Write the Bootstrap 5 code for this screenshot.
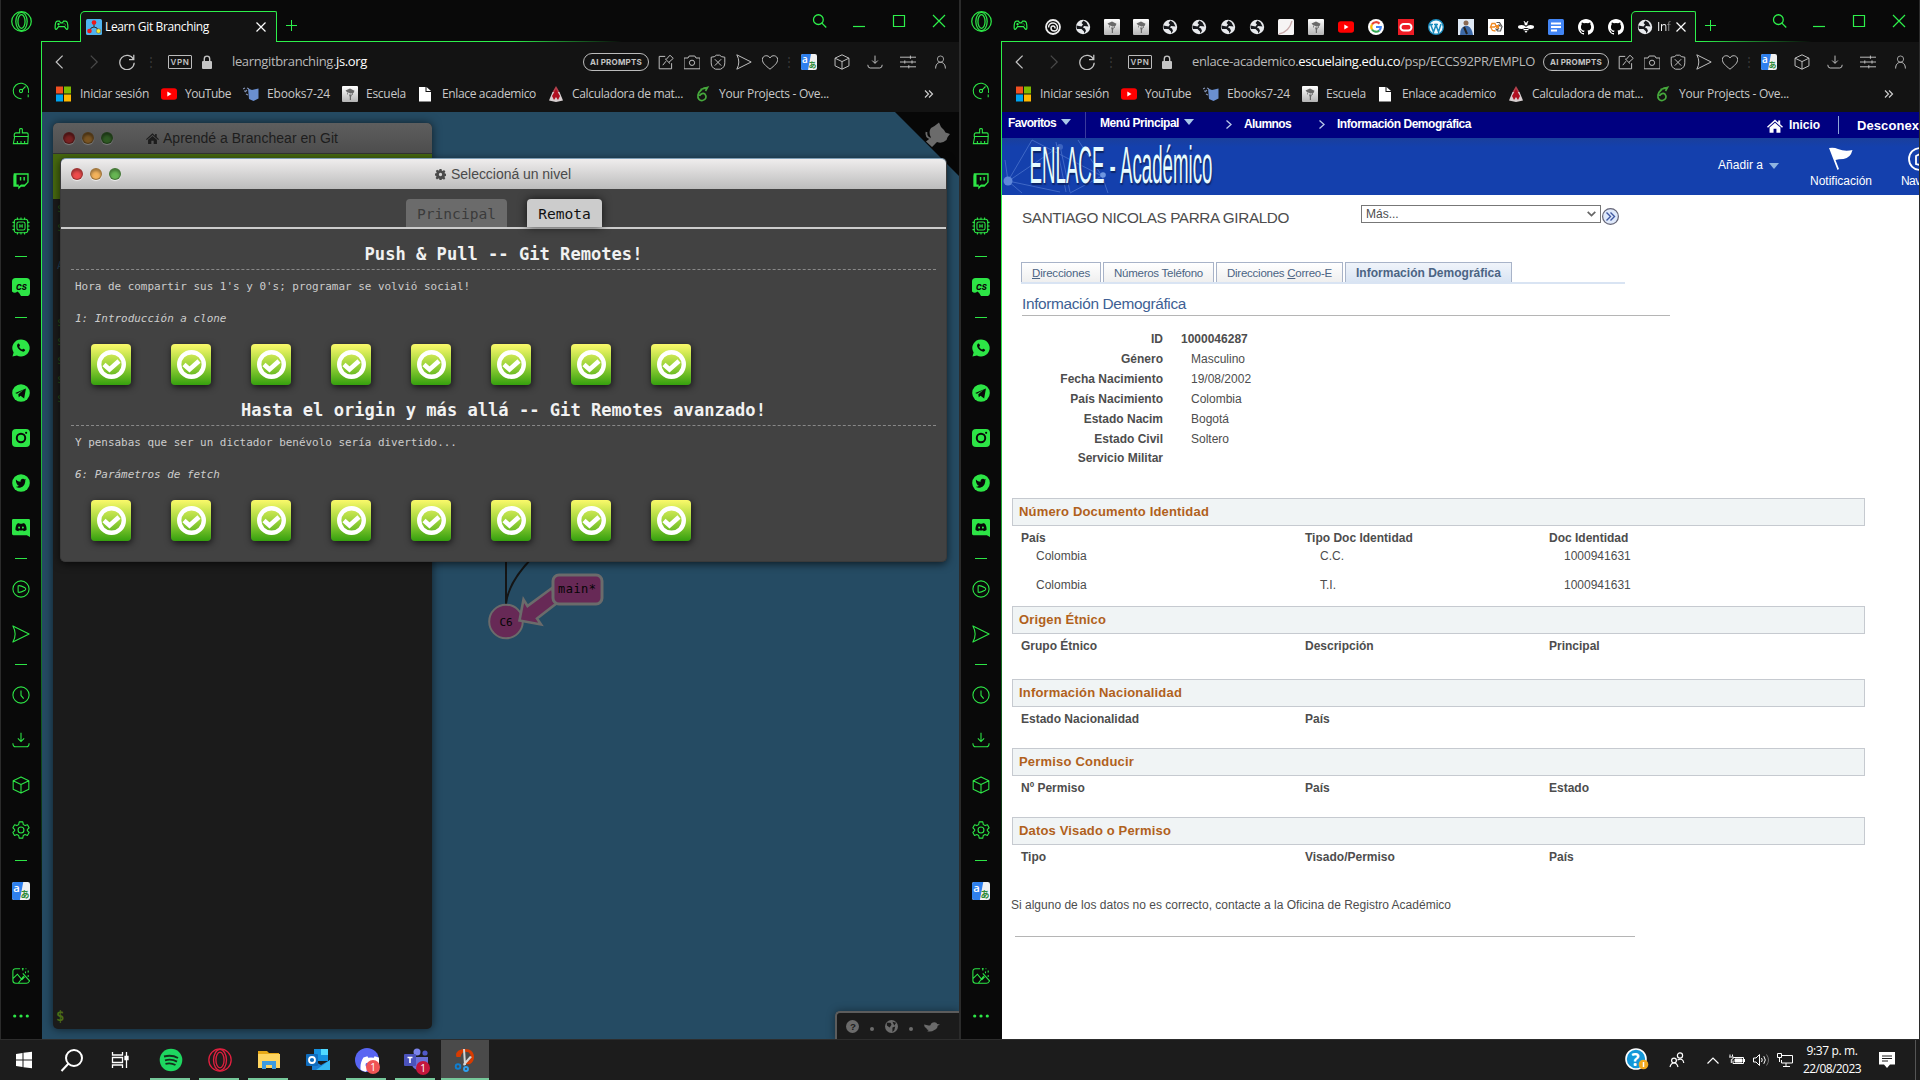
<!DOCTYPE html>
<html lang="es">
<head>
<meta charset="utf-8">
<title>Escritorio</title>
<link rel="stylesheet" href="https://cdn.jsdelivr.net/npm/bootstrap@5.3.0/dist/css/bootstrap.min.css">
<style>
:root{--neon:#2df04b;--chrome:#131313}
body{width:1920px;height:1080px;overflow:hidden;background:#0a0a0a;font:12px/16px "Open Sans","Noto Sans",sans-serif;letter-spacing:0}
svg{display:block;flex:none}
.ico{width:20px;height:20px;fill:none;stroke:currentColor;stroke-width:1.2}
.fit{display:inline-block;white-space:nowrap;flex:none}
.opera-win{width:960px;height:1040px;border-bottom:1px solid #2d2d2d;overflow:hidden}
.sidebar-gx{width:42px;flex:none;border-left:1px solid #2b2b2b;color:#2de546;background:linear-gradient(#2df04b 25%,#0f5a1c 65%,#0a0a0a 85%) right 41px/1px 100% no-repeat #090909}
.sidebar-gx .cell{height:45px;width:40px}
.sidebar-gx .dash{height:16px;width:40px}
.sidebar-gx .dash::before{content:"";width:12px;height:1px;background:currentColor}
.sidebar-gx .ico{width:18px;height:18px}
.sidebar-gx .low{height:40px;width:40px}
.win-main{width:918px;border-right:1px solid #2b2b2b}
.tabstrip{height:42px;background:linear-gradient(90deg,var(--neon) 0,var(--neon) var(--glow),transparent calc(var(--glow) + 110px)) 0 41px/100% 1px no-repeat #090909;color:var(--neon)}
.gx-tab{height:31px;background:var(--chrome);border:1px solid var(--neon);border-bottom:0;border-radius:5px 2px 0 0;color:#fff}
.pin{width:30px;height:31px;color:#e8eaed}
.pin.near{width:29px}
.pin svg{width:16px;height:16px}
.winbtn{width:40px;height:42px}
.toolbar{height:40px;background:var(--chrome);color:#c4c4c4}
.toolbar .ico{width:16px;height:16px}
.tc{width:33px}.tc2{width:26px}.tdots{width:9px;color:#3a3a3a}
.vpn{width:24px;height:14px;border:1px solid #bbb;border-radius:1px;font:600 8px/12px Inter,sans-serif}
.url{font-size:13px;line-height:16px;padding-bottom:2px;color:#b9b9b9}
.url b{color:#fff;font-weight:400}
.ai{width:66px;height:18px;border:1px solid #bbb;border-radius:9px;font:700 8px/16px Inter,sans-serif}
.bookmarks{height:30px;background:var(--chrome);color:#c9c9c9;padding-left:14px;gap:12px}
.bookmarks svg.bk{width:16px;height:16px}
.webpage{height:928px}
/* git page */
.gitpage{background:#254b63;font-family:"DejaVu Sans Mono",monospace}
.term{left:11px;top:11px;width:379px;height:906px;background:#1b1b1b;border-radius:5px;box-shadow:0 0 10px rgba(0,0,0,.6)}
.tbar{height:31px;border-radius:5px 5px 0 0;padding-left:10px;font:14px/30px "Liberation Sans",sans-serif}
.term .tbar{background:linear-gradient(#5e5e5e,#4d4d4d);color:#1d1d1d;border-bottom:1px solid #333}
.lamp{width:12px;height:12px;border-radius:50%;border:1px solid rgba(0,0,0,.35);box-shadow:0 1px 1px rgba(255,255,255,.7),inset 0 2px 3px rgba(0,0,0,.35)}
.term .lamp{box-shadow:0 1px 1px rgba(255,255,255,.25),inset 0 2px 3px rgba(0,0,0,.45)}
.goal{height:45px;background:#46680f}
.prompt{font-size:11px;line-height:19px;color:#28511a;padding-left:4px}
.dialog-gl{left:18px;top:46px;width:887px;height:404px;background:#424242;border-radius:5px;border:1px solid #3a3a3a;border-width:0 1px 1px 1px;box-shadow:0 2px 9px rgba(0,0,0,.65);color:#ccc}
.dialog-gl>.tbar{background:linear-gradient(#efeded,#bcbcbc);color:#4a4a4a;border-top:1px solid #7d9db5}
.tabrow{height:40px;border-bottom:2px solid #ccc;padding-left:1px}
.ltab{height:28px;border-radius:4px 4px 0 0;background:#6b6b6b;color:#3b3b3b;font-size:14.6px;line-height:30px}
.ltab.on{background:#ccc;color:#111;box-shadow:0 0 10px rgba(0,0,0,.7)}
.serie h3{font-size:17.1px;font-weight:700;line-height:28px;margin:0 10px;padding:11px 0 1px;border-bottom:1px dashed #888;color:#f1f1f1;text-align:center}
.serie p{font-size:10.94px;line-height:34px;height:32px;margin:0;padding-left:14px}
.levels{padding:10px 0 0 30px;gap:40px}
.lvl{width:40px;height:41px;border-radius:4px;background:linear-gradient(#fbf96a,#9fd53b 50%,#35a00e);box-shadow:1px 2px 7px rgba(0,0,0,.7)}
.footbox{right:0;bottom:0;width:124px;height:29px;background:#1b1b1b;border:2px solid #5c5c5c;border-width:2px 0 0 2px;border-radius:5px 0 0 0;color:#6b6b6b;box-shadow:0 0 8px rgba(0,0,0,.4)}
/* academic page */
.acad{background:#fff;font-family:"Liberation Sans",Arial,sans-serif;color:#4d4d4d}
.crumbs{height:26px;background:#000080;color:#fff;font-weight:700}
.crumbs>*{flex:none}
.banner{height:57px;background:linear-gradient(#1a3f9c,#1440ad 9px);color:#fff}
.who{height:43px;font-size:15.3px;padding-left:20px}
.pick{width:240px;height:18px;border:1px solid #777;font-size:12px;line-height:15px;padding:0 4px;margin-top:10px}
.ptabs{margin:24px 0 0 19px;width:604px;height:22px;border-bottom:2px solid #d9e4f3;gap:2px}
.ptab{height:20px;border:1px solid #a8b3c8;border-bottom:0;background:linear-gradient(#fff,#efefef);color:#4b6484;line-height:20px;font-size:11.5px;text-align:center;flex:none}
.ptab.on{background:linear-gradient(#f0f4fa,#d9e4f3);font-weight:700;font-size:12px}
.ptitle{margin:8px 0 13px 20px;width:648px;height:24px;font-size:15.4px;line-height:24px;color:#405f94;border-bottom:1px solid #b5b5b5}
.frow{height:20px;line-height:20px}
.frow .lab{width:161px;text-align:right;font-weight:700}
.shead{width:853px;height:28px;margin-left:10px;border:1px solid #c6cad0;background:#f0f4f5;color:#b0611c;font-weight:700;font-size:13px;line-height:26px;padding-left:6px}
.scols{line-height:20px;margin:2px 0 0 19px;font-weight:700}
.sval{line-height:16px;margin-left:34px}
.c1{width:284px;flex:none}.c2{width:244px;flex:none}
/* taskbar */
.taskbar{height:40px;background:#1c1c1c;color:#fff}
.tk{width:49px;height:40px;position:relative}
.tk.sys{width:48px}
.tk.run::after{content:"";position:absolute;left:4px;right:5px;bottom:0;height:2px;background:#76c89a}
.tk.act{background:#4a4a4a;width:48px}.tk.act::after{left:0;right:0}
.tk svg{width:24px;height:24px}
.nbadge{right:3px;bottom:6px;width:14px;height:14px;border-radius:50%;background:#f05454;font-size:10px;line-height:14px;text-align:center}
</style>
<script src="https://cdn.jsdelivr.net/npm/bootstrap@5.3.0/dist/js/bootstrap.bundle.min.js"></script>
</head>
<body>
<svg width="0" height="0" class="position-absolute">
<defs>
<linearGradient id="gy" x1="0" y1="0" x2="0" y2="1"><stop offset="0" stop-color="#fff"/><stop offset="1" stop-color="#b5b5b5"/></linearGradient>
<symbol id="opera" viewBox="0 0 20 20"><circle cx="10" cy="10" r="9.3"/><ellipse cx="10" cy="10" rx="5.4" ry="8.8"/><ellipse cx="10" cy="10" rx="3.4" ry="6.5"/></symbol>
<symbol id="pad" viewBox="0 0 20 20"><path d="M5 5.500h2.500L9 7.500h2l1.500-2H15c2 0 2.500 5 2.500 8 0 2-1.500 2-2.500.5L13.500 12h-7L5 14c-1 1.500-2.500 1.500-2.500-.5 0-3 .5-8 2.500-8zM5 9h3M6.500 7.500v3M12.500 8.500h1M14 10h1" stroke-width="1.400"/></symbol>
<symbol id="speed" viewBox="0 0 20 20"><path d="M10.500 18.500A8.600 8.600 0 1 1 18.300 12M18 14v3M11 9l4-4"/><circle cx="10" cy="10" r="1.800"/></symbol>
<symbol id="broom" viewBox="0 0 20 20"><path d="M8.500 6.500V2.500c0-1 3-1 3 0v4h5q1.500 0 1.500 2v2H2.500v-2q0-2 2-2zM3 10.500l-1.500 8h16l.5-8M6 18.500v-3M10 18.500v-3M14 18.500v-3"/></symbol>
<symbol id="twitch" viewBox="0 0 20 20"><path d="M2 1.500h16.500v10l-4.500 5H10l-3 3v-3H1.500v-12z" fill="currentColor" stroke="none"/><path d="M5 3h12v8l-3 3H10l-2.500 2v-2H5z" fill="#090909" stroke="none"/><path d="M9.500 5.500v4M13.500 5.500v4" stroke-width="1.600"/></symbol>
<symbol id="cpu" viewBox="0 0 20 20"><rect x="2.500" y="2.500" width="15" height="15" rx="2.500"/><rect x="5.500" y="5.500" width="9" height="9" rx="2"/><path d="M8.700 8v4M11.300 8v4M8.700 10h2.600M6 0.500V3M10 0.500V3M14 .5V3M6 17v2.500M10 17v2.500M14 17v2.500M.5 6H3M.5 10H3M.5 14H3M17 6h2.500M17 10h2.500M17 14h2.500"/></symbol>
<symbol id="cs" viewBox="0 0 20 20"><path d="M4 0h12q4 0 4 4v12q0 4-4 4h-6q-2-4-4-5-3 3-6 0V4q0-4 4-4z" fill="currentColor" stroke="none"/><text x="4.500" y="13.500" font-family="Inter,sans-serif" font-size="8.500" font-style="italic" font-weight="800" fill="#090909" stroke="none">CS</text></symbol>
<symbol id="wa" viewBox="0 0 20 20"><path d="M10 .5a9.500 9.500 0 1 1-4.500 17.800L.5 19.500 1.800 15A9.500 9.500 0 0 1 10 .5z" fill="currentColor" stroke="none"/><path d="M6.300 5.500c-1.800 2 .4 5.500 3 7.200 2.200 1.500 4.300 2 5.200.1.400-.9-.8-1.600-1.900-2-.7-.2-1 1-1.600.9-1.400-.4-2.800-1.900-3-3 0-.5 1-.9.8-1.600-.6-1.800-1.300-2.700-2.500-1.600z" fill="#090909" stroke="none"/></symbol>
<symbol id="tg" viewBox="0 0 20 20"><circle cx="10" cy="10" r="9.800" fill="currentColor" stroke="none"/><path d="M3.500 10 15.500 5l-2 11-4-3-2 1.800-.5-3.500 6-5-7.500 4.500z" fill="#090909" stroke="none"/></symbol>
<symbol id="ig" viewBox="0 0 20 20"><rect width="20" height="20" rx="4.500" fill="currentColor" stroke="none"/><circle cx="10" cy="10" r="4.700" stroke="#090909" stroke-width="2.200"/><circle cx="15.700" cy="4.300" r="1.200" fill="#090909" stroke="none"/></symbol>
<symbol id="bird" viewBox="0 0 20 20"><path d="M1 3.500C3.200 6 6 7.400 9.300 7.500 8.600 4.300 11 2 13.500 2c1.300 0 2.300.6 3 1.300L19 2.300l-1.400 2.100 1.900-.4-1.700 1.900C18.200 12.500 13 18 7.500 18 5 18 2.500 17.300 1 16.200c2 .1 4-.5 5.400-1.600-1.700-.2-2.900-1.200-3.400-2.700h1.500C2.800 11.200 1.700 10 1.600 8l1.600.5C1.300 7.100.4 5.300 1 3.500z"/></symbol>
<symbol id="twc" viewBox="0 0 20 20"><circle cx="10" cy="10" r="9.800" fill="currentColor" stroke="none"/><svg x="3.500" y="4" width="13" height="12.500" viewBox="0 0 20 20"><path d="M1 3.500C3.200 6 6 7.400 9.300 7.500 8.600 4.300 11 2 13.500 2c1.300 0 2.300.6 3 1.300L19 2.300l-1.400 2.100C18.200 12.500 13 18 7.500 18 5 18 2.500 17.300 1 16.200c2 .1 4-.5 5.400-1.600-1.700-.2-2.900-1.200-3.400-2.700C1.800 10 .4 6.300 1 3.500z" fill="#090909" stroke="none"/></svg></symbol>
<symbol id="dcface" viewBox="0 0 20 20"><path d="M7 3.500 3.700 4.600C1.800 7.400 1 10.800 1.300 14.500c1.500 1.100 3 1.700 4.500 2l1-1.600c2 .7 4.500.7 6.500 0l1 1.600c1.500-.3 3-.9 4.500-2 .3-3.700-.5-7.100-2.400-9.900L13 3.500l-.7 1.200q-2.300-.3-4.600 0zM7 9a1.600 1.800 0 1 1 0 3.600A1.600 1.800 0 0 1 7 9zm6 0a1.600 1.800 0 1 1 0 3.600A1.600 1.800 0 0 1 13 9z" fill-rule="evenodd" stroke="none"/></symbol>
<symbol id="dc" viewBox="0 0 20 20"><path d="M1.500 0h17q1.500 0 1.500 1.500V20l-3.500-2h-15Q0 18 0 16.500v-15Q0 0 1.500 0z" fill="currentColor" stroke="none"/><svg x="3" y="2" width="14" height="14" viewBox="0 0 20 20"><path d="M7 3.500 3.700 4.600C1.800 7.400 1 10.800 1.300 14.500c1.500 1.100 3 1.700 4.500 2l1-1.600c2 .7 4.500.7 6.500 0l1 1.600c1.500-.3 3-.9 4.500-2 .3-3.700-.5-7.100-2.400-9.900L13 3.500l-.7 1.200q-2.300-.3-4.600 0zM7 9a1.600 1.800 0 1 1 0 3.600A1.600 1.800 0 0 1 7 9zm6 0a1.600 1.800 0 1 1 0 3.600A1.600 1.800 0 0 1 13 9z" fill="#090909" fill-rule="evenodd" stroke="none"/></svg></symbol>
<symbol id="play" viewBox="0 0 20 20"><circle cx="10" cy="10" r="9"/><path d="M6.800 6.500v7q1.500 1 7.700-2.200 1.500-1.300 0-2.600Q8.500 5.500 6.800 6.500z" stroke-linejoin="round"/></symbol>
<symbol id="send" viewBox="0 0 20 20"><path d="M1 1l18 9-18 9q5-9 0-18z" stroke-linejoin="round"/></symbol>
<symbol id="clock" viewBox="0 0 20 20"><circle cx="10" cy="10" r="9"/><path d="M10 5v5.500l3 3.500"/></symbol>
<symbol id="down" viewBox="0 0 20 20"><path d="M10 2v9.500M6.500 8.200l3.500 3.500 3.500-3.500M1 13.500q0 4 3 4h12q3 0 3-4"/></symbol>
<symbol id="cube" viewBox="0 0 20 20"><path d="M10 1l8.700 4.200v9.600L10 19l-8.700-4.200V5.200zM1.300 5.200 10 9.500l8.700-4.300M10 9.500V19" stroke-linejoin="round"/></symbol>
<symbol id="gear" viewBox="0 0 20 20"><circle cx="10" cy="10" r="3.300"/><path d="M8 1h4l.6 3 2 1.100 2.600-1 1.800 3.400-2 2v1.200l2 2-1.900 3.300-2.600-1-2 1.100L12 19H8l-.6-2.900-2-1.100-2.600 1L1 12.700l2-2V9.500l-2-2 1.900-3.400 2.500 1L7.400 4z" stroke-linejoin="round"/></symbol>
<symbol id="tr" viewBox="0 0 16 16"><rect width="16" height="16" rx="2" fill="#f1f1f1" stroke="none"/><path d="M2 0h8L7 16H2q-2 0-2-2V2q0-2 2-2z" fill="#2f80ed" stroke="none"/><text x="1" y="9" font-family="Open Sans,sans-serif" font-size="10" font-weight="600" fill="#fff" stroke="none">a</text><text x="7.600" y="14" font-family="Noto Sans CJK JP,sans-serif" font-size="8" font-weight="700" fill="#2e8b3a" stroke="none">あ</text></symbol>
<symbol id="pic" viewBox="0 0 20 20"><path d="M9 2H4Q1 2 1 5v10q0 3 3 3h12q2 0 3-2M1 13l5-5 5 6 3-3M7 18l6-8M12 7l8 9M11 2h2M15 2h1M18 4v2M18 9v2M12 1v3M15 5v2"/></symbol>
<symbol id="more" viewBox="0 0 20 20"><g fill="currentColor" stroke="none"><circle cx="3" cy="10" r="1.800"/><circle cx="10" cy="10" r="1.800"/><circle cx="17" cy="10" r="1.800"/></g></symbol>
<symbol id="glass" viewBox="0 0 20 20"><circle cx="8.500" cy="7.500" r="6.500" stroke-width="1.700"/><path d="M13.200 12.200 19 18" stroke-width="1.700"/></symbol>
<symbol id="shot" viewBox="0 0 20 20"><path d="M9 3H1.500v15.500h15.500v-7M6 14l4-5M9 6l6 6M10 7l5-5.500L19 5.500 13.500 10.500"/></symbol>
<symbol id="cam" viewBox="0 0 20 20"><path d="M0 5h5l1.500-2.500h7L15 5h5v13.500H0z" stroke-linejoin="round"/><circle cx="10" cy="11" r="3.300"/></symbol>
<symbol id="shield" viewBox="0 0 20 20"><path d="M1.500 4q4.500 0 6.500-2.500h4q2 2.500 6.500 2.500v7q0 6-5.500 8H7q-5.500-2-5.500-8z"/><path d="M6 6.500l8 8M14 6.500l-8 8"/></symbol>
<symbol id="heart" viewBox="0 0 20 20"><path d="M10 19C4 14 .5 11.500.5 6.800.5 1.500 8 .5 10 5c2-4.500 9.500-3.500 9.500 1.800 0 4.700-3.500 7.200-9.500 12.200z"/></symbol>
<symbol id="sliders" viewBox="0 0 20 20"><path d="M0 4h20M0 10h20M0 16h20M13 2v4M6 8v4M15 8v4M11 14v4"/></symbol>
<symbol id="person" viewBox="0 0 20 20"><circle cx="10" cy="5.500" r="4.800"/><path d="M2.500 20c0-6 3-9.500 7.500-9.500s7.500 3.500 7.500 9.500" stroke-width="1.500"/></symbol>
<symbol id="reload" viewBox="0 0 20 20"><path d="M18 6.500A9 9 0 1 0 19 11M18.500 1v6h-6" stroke-width="1.600"/></symbol>
<symbol id="yt" viewBox="0 0 16 16"><rect y="2.200" width="16" height="11.600" rx="2.800" fill="#f00"/><path d="M6.300 5.500v5L10.500 8z" fill="#fff"/></symbol>
<symbol id="esc" viewBox="0 0 16 16"><rect width="16" height="16" rx="1" fill="url(#gy)"/><path d="M3.500 4.500 8 2.500l4.500 2.200-1 2.300-3 .6L5 6zM7 8.500h3L9 11v3H7.800v-3z" fill="#6a6a6a"/><path d="M5.500 6.500v2M10.500 7v2" stroke="#888" fill="none"/></symbol>
<symbol id="globe" viewBox="0 0 16 16"><circle cx="8" cy="8" r="7.200" fill="#e8eaed"/><path d="M8.500 1.500 6.500 4 8 5.500 6.500 7.500 1.500 6.500A7 7 0 0 0 2 10l4.500 0L9 12.500v2l2-2.500-1-2.500-2-1 1-1.500 4.500.5-2-4z" fill="#16181c"/></symbol>
<symbol id="gh" viewBox="0 0 16 16"><path d="M8 0C3.580 0 0 3.580 0 8c0 3.540 2.290 6.530 5.470 7.590.4.070.55-.17.55-.38v-1.330c-2.010.37-2.530-.49-2.690-.94-.09-.23-.48-.94-.82-1.130-.28-.15-.68-.52-.01-.53.63-.01 1.080.58 1.230.82.72 1.210 1.870.87 2.330.66.070-.52.280-.87.510-1.070-1.780-.2-3.640-.89-3.640-3.950 0-.87.310-1.590.820-2.150-.08-.2-.36-1.020.08-2.120 0 0 .67-.21 2.200.820a7.600 7.600 0 0 1 4 0c1.530-1.040 2.200-.82 2.200-.82.440 1.100.160 1.920.080 2.120.510.560.820 1.270.820 2.150 0 3.070-1.870 3.750-3.650 3.950.290.250.540.730.540 1.480v2.200c0 .21.150.46.550.38A8 8 0 0 0 16 8c0-4.420-3.580-8-8-8z" fill="#fff"/></symbol>
<symbol id="home" viewBox="0 0 20 20"><path d="M10 2 0 11l1.200 1.300L10 4.500l8.800 7.800L20 11l-3.500-3.200V3H14v2.600zM10 6l-6.800 6v6.500h5v-5h3.600v5h5V12z" fill="currentColor"/></symbol>
<symbol id="cog" viewBox="0 0 16 16"><path d="M6.500 0h3l.4 2.300 1.300.5 1.900-1.300 2 2-1.200 1.900.5 1.300 1.600.3v3l-1.700.4-.5 1.200 1.200 1.900-1.900 2-1.900-1.200-1.300.5L9.500 16h-3l-.4-1.700-1.300-.5-1.900 1.300-2-2 1.200-1.900-.5-1.200L0 9.500v-3l1.900-.4.5-1.300-1.300-1.900 2-1.900 1.900 1.200 1.200-.5zM8 5.600a2.400 2.400 0 1 0 0 4.800 2.400 2.400 0 0 0 0-4.800z" fill="currentColor" fill-rule="evenodd"/></symbol>
<symbol id="check" viewBox="0 0 40 41"><circle cx="20.500" cy="20.500" r="12.300" fill="none" stroke="#fff" stroke-width="4.400"/><path d="M13 20.500l5.500 5 9.500-8.500" fill="none" stroke="#fff" stroke-width="4.600"/></symbol>
</defs>
</svg>

<template id="t-side">
 <div class="d-flex justify-content-center align-items-center" style="height:42px"><svg class="ico" style="width:21px;height:21px"><use href="#opera"/></svg></div>
 <div style="height:26px"></div>
</template>
<template id="t-nav">
 <span class="tc d-flex justify-content-center" style="margin-left:2px"><svg class="ico" viewBox="0 0 20 20"><path d="M12 2 4 10l8 8" stroke-width="1.500"/></svg></span>
 <span class="tc d-flex justify-content-center" style="color:#4a4a4a"><svg class="ico" viewBox="0 0 20 20"><path d="M6 2l8 8-8 8" stroke-width="1.500"/></svg></span>
 <span class="tc d-flex justify-content-center"><svg class="ico"><use href="#reload"/></svg></span>
 <span class="tdots text-center" style="margin-left:2px">⋮</span>
 <span class="vpn text-center" style="margin-left:14px"><span class="fit" data-w="19">VPN</span></span>
 <svg width="12" height="14" viewBox="0 0 12 14" style="margin:0 19px 0 9px"><rect x="1" y="6" width="10" height="8" rx="1" fill="#c4c4c4"/><path d="M3.300 6V3.800a2.700 2.700 0 0 1 5.400 0V6" fill="none" stroke="#c4c4c4" stroke-width="1.400"/></svg>
</template>
<template id="t-act">
 <span class="ai text-center ms-auto"><span class="fit" data-w="52">AI PROMPTS</span></span>
 <span style="width:4px"></span>
 <span class="tc2 d-flex justify-content-center"><svg class="ico"><use href="#shot"/></svg></span>
 <span class="tc2 d-flex justify-content-center"><svg class="ico"><use href="#cam"/></svg></span>
 <span class="tc2 d-flex justify-content-center"><svg class="ico"><use href="#shield"/></svg></span>
 <span class="tc2 d-flex justify-content-center"><svg class="ico"><use href="#send"/></svg></span>
 <span class="tc2 d-flex justify-content-center"><svg class="ico"><use href="#heart"/></svg></span>
 <span class="tdots text-center">⋮</span>
 <span class="tc d-flex justify-content-center"><svg class="ico"><use href="#tr"/></svg></span>
 <span class="tc d-flex justify-content-center"><svg class="ico"><use href="#cube"/></svg></span>
 <span class="tc d-flex justify-content-center"><svg class="ico"><use href="#down"/></svg></span>
 <span class="tc d-flex justify-content-center"><svg class="ico"><use href="#sliders"/></svg></span>
 <span class="tc d-flex justify-content-center" style="margin-right:2px"><svg class="ico" style="width:13px"><use href="#person"/></svg></span>
</template>
<template id="t-book">
 <span class="d-flex gap-2"><svg class="bk" viewBox="0 0 16 16"><path fill="#f25022" d="M0 .5h7v7H0z"/><path fill="#7fba00" d="M8 .5h7v7H8z"/><path fill="#00a4ef" d="M0 8.500h7v7H0z"/><path fill="#ffb900" d="M8 8.500h7v7H8z"/></svg><span class="fit" data-w="69">Iniciar sesión</span></span>
 <span class="d-flex gap-2"><svg class="bk"><use href="#yt"/></svg><span class="fit" data-w="46">YouTube</span></span>
 <span class="d-flex gap-2"><svg class="bk" viewBox="0 0 16 16"><path d="M5 2.500 9 4l6.500-1.500v10l-5 2.500L6 13z" fill="#6a8fd0"/><path d="M0 3l2-1M2 6l2-2M1 5h2M4 2l2 1M3 8l2 1" stroke="#8090b0" stroke-width="1.200"/></svg><span class="fit" data-w="63">Ebooks7-24</span></span>
 <span class="d-flex gap-2"><svg class="bk"><use href="#esc"/></svg><span class="fit" data-w="40">Escuela</span></span>
 <span class="d-flex gap-2"><svg class="bk" viewBox="0 0 16 16"><path d="M1 1h6.500v5H13v9.500H1zM8.500 1 13 5H8.500z" fill="#fff"/></svg><span class="fit" data-w="94">Enlace academico</span></span>
 <span class="d-flex gap-2"><svg class="bk" viewBox="0 0 16 16"><path d="M8 0l3.500 6H4.500z" fill="#b3424e"/><path d="M4.500 6 1 14.500 8 16l7-1.500L11.500 6z" fill="#d8cfd0"/><path d="M8 3l4 7-2 4-2-3-2 3-2-4z" fill="#b01020"/></svg><span class="fit" data-w="111">Calculadora de mat...</span></span>
 <span class="d-flex gap-2"><svg class="bk" viewBox="0 0 16 16"><path d="M12 1.500C8 1.500 4 5 3 9c-.8 4 2 6 4.500 5.500 3.500-.7 4.500-4 2.500-6.300C8.500 6.800 5.500 7.500 4.500 10M5.500 3.500 12.500 1.500 10.500 5" fill="none" stroke="#46a83c" stroke-width="1.700"/></svg><span class="fit" data-w="110">Your Projects - Ove...</span></span>
 <span class="ms-auto" style="margin-right:25px;padding-top:4px"><svg width="10" height="8" viewBox="0 0 10 8" fill="none" stroke="#ccc" stroke-width="1.200"><path d="M1 .5 4.500 4 1 7.500M5 .5 8.500 4 5 7.500"/></svg></span>
</template>
<template id="t-wb">
 <span class="winbtn d-flex justify-content-center align-items-center ms-auto"><svg class="ico" style="width:15px;height:15px"><use href="#glass"/></svg></span>
 <span class="winbtn d-flex justify-content-center align-items-center"><svg class="ico" viewBox="0 0 20 20"><path d="M4 15.500h12"/></svg></span>
 <span class="winbtn d-flex justify-content-center align-items-center"><svg class="ico" viewBox="0 0 20 20"><path d="M4.500 4.500h11v11h-11z"/></svg></span>
 <span class="winbtn d-flex justify-content-center align-items-center"><svg class="ico" viewBox="0 0 20 20"><path d="M4 4l12 12M16 4 4 16"/></svg></span>
</template>

<div class="d-flex">
<!-- left window -->
<section class="opera-win d-flex">
 <aside class="sidebar-gx" data-side></aside>
 <div class="win-main">
  <div class="tabstrip d-flex" style="--glow:470px">
   <span class="d-flex justify-content-center align-items-center pt-2" style="width:38px"><svg class="ico" style="width:17px"><use href="#pad"/></svg></span>
   <div class="gx-tab d-flex align-items-center align-self-end" style="width:197px;padding:0 10px 0 5px">
    <svg width="16" height="16" viewBox="0 0 16 16"><rect width="16" height="16" rx="1.500" fill="#4fb3f0"/><path d="M8 4v4M4 12q0-4 4-4t4 4" stroke="#333" fill="none"/><circle cx="8" cy="3.500" r="2.300" fill="#f01818"/><circle cx="3.500" cy="12" r="2.300" fill="#f01818"/><circle cx="12.500" cy="12" r="2.300" fill="#f5ee30" stroke="#555" stroke-width=".5"/></svg>
    <span class="fit" data-w="104" style="margin-left:3px">Learn Git Branching</span>
    <svg class="ms-auto" width="10" height="10" viewBox="0 0 10 10" stroke="#fff" stroke-width="1.200"><path d="M.5.5l9 9M9.500.5l-9 9"/></svg>
   </div>
   <span class="d-flex align-items-center pt-2" style="padding-left:9px"><svg width="11" height="11" viewBox="0 0 11 11" stroke="currentColor"><path d="M5.500 0v11M0 5.500h11"/></svg></span>
   <span class="d-flex flex-grow-1" data-t="t-wb"></span>
  </div>
  <div class="toolbar d-flex align-items-center"><span class="d-flex align-items-center" data-t="t-nav"></span><span class="url fit" data-w="135">learngitbranching.<b>js.org</b></span><span class="d-flex align-items-center ms-auto" data-t="t-act"></span></div>
  <div class="bookmarks d-flex align-items-start pt-1" data-t="t-book"></div>
  <div class="webpage gitpage position-relative overflow-hidden">
   <svg class="position-absolute" style="right:0;top:0" width="64" height="64" viewBox="0 0 64 64"><path d="M0 0h64v64z" fill="#070707"/><path d="M44 10.500 46 15Q49 17.500 50.500 20.500L55 22Q52 25 51.500 28 47 32 42 30L37 35 31 29.500 36 25.500Q33 20 36 16 40 14 44 10.500z" fill="#6b6b6b"/><path d="M31.500 20q-1 5 4 6.500" fill="none" stroke="#6b6b6b" stroke-width="1.800"/></svg>
   <div class="term position-absolute">
    <div class="tbar d-flex align-items-center"><span class="d-flex" style="gap:7px"><i class="lamp" style="background:#7a2222"></i><i class="lamp" style="background:#7a5523"></i><i class="lamp" style="background:#2f5a24"></i></span><svg width="13" height="13" style="margin:0 4px 0 33px"><use href="#home"/></svg><span class="fit" data-w="175">Aprendé a Branchear en Git</span></div>
    <div class="goal"></div>
    <div class="d-flex flex-column justify-content-between" style="height:830px">
     <div class="prompt">$<br>$<br><br><span style="color:#24425a">A</span><br><br><br>$<br>$<br>$<br>$<br>$</div>
     <div style="color:#4a6d16;font:700 14px/20px 'DejaVu Sans Mono',monospace;padding:0 0 3px 3px">$</div>
    </div>
   </div>
   <svg class="position-absolute" style="left:398px;top:440px" width="180" height="110" viewBox="440 552 180 110">
    <path d="M506 552v55M534 556q-26 26-28 48" fill="none" stroke="#151515" stroke-width="2"/>
    <circle cx="506" cy="621.500" r="16.800" fill="#672956" stroke="#6b6b6b" stroke-width="2"/>
    <path d="M519.500 620.500 523.500 599.500 527.500 606 552 588 557 603 537 618.500 541 624.500z" fill="#672956" stroke="#6b6b6b" stroke-width="2.600"/>
    <rect x="553" y="575" width="49" height="29" rx="6" fill="#672956" stroke="#6b6b6b" stroke-width="3"/>
    <text x="558" y="593" font-size="12" textLength="38" font-family="DejaVu Sans Mono,monospace" fill="#050505">main*</text>
    <text x="499.500" y="626" font-size="11" textLength="13" font-family="DejaVu Sans Mono,monospace" fill="#050505">C6</text>
   </svg>
   <div class="dialog-gl position-absolute">
    <div class="tbar d-flex align-items-center"><span class="d-flex" style="gap:7px"><i class="lamp" style="background:#ee4c4c"></i><i class="lamp" style="background:#f3b35c"></i><i class="lamp" style="background:#67b653"></i></span><svg width="11" height="11" style="margin:0 5px 0 314px"><use href="#cog"/></svg><span class="fit" data-w="120">Seleccioná un nivel</span></div>
    <div class="tabrow d-flex justify-content-center align-items-end" style="gap:20px"><div class="ltab text-center" style="width:101px">Principal</div><div class="ltab on text-center" style="width:75px">Remota</div></div>
    <div class="serie"><h3>Push &amp; Pull -- Git Remotes!</h3><p>Hora de compartir sus 1's y 0's; programar se volvió social!</p><p class="fst-italic">1: Introducción a clone</p><div class="levels d-flex" data-levels="8"></div></div>
    <div class="serie"><h3>Hasta el origin y más allá -- Git Remotes avanzado!</h3><p>Y pensabas que ser un dictador benévolo sería divertido...</p><p class="fst-italic">6: Parámetros de fetch</p><div class="levels d-flex" data-levels="8"></div></div>
   </div>
   <div class="footbox position-absolute d-flex align-items-center" style="padding-left:9px">
    <svg width="13" height="13" viewBox="0 0 14 14"><circle cx="7" cy="7" r="7" fill="currentColor"/><text x="4.200" y="10.800" font-size="10.500" font-weight="700" font-family="Liberation Sans,sans-serif" fill="#1b1b1b">?</text></svg>
    <span class="rounded-circle" style="width:4px;height:4px;background:currentColor;margin:4px 11px 0"></span>
    <svg width="13" height="13" viewBox="0 0 14 14"><circle cx="7" cy="7" r="7" fill="currentColor"/><path d="M2 3l4 0 1 2-2 3-3-2zM8 2l4 1-2 3zM8 8l3-1-1 4-2 2z" fill="#1b1b1b"/></svg>
    <span class="rounded-circle" style="width:4px;height:4px;background:currentColor;margin:4px 11px 0"></span>
    <svg width="16" height="12" viewBox="0 0 20 20" preserveAspectRatio="none" fill="currentColor"><path d="M0 6q5 2 8 1 1-5 5-5 3 0 3.500 3L20 6l-3 2q0 5-4 7-4 4-9 2l2-2q-3 0-3-3Q0 10 0 6z"/></svg>
   </div>
  </div>
 </div>
</section>

<!-- right window -->
<section class="opera-win d-flex">
 <aside class="sidebar-gx" data-side></aside>
 <div class="win-main">
  <div class="tabstrip d-flex" style="--glow:700px">
   <span class="d-flex justify-content-center align-items-center pt-2" style="width:36px"><svg class="ico" style="width:17px"><use href="#pad"/></svg></span>
   <div class="d-flex align-self-end" id="pins">
    <span class="pin"><svg viewBox="0 0 16 16"><circle cx="8" cy="8" r="7" fill="none" stroke="#eee" stroke-width="1.800"/><path d="M3.500 8.500C3.500 2 13 3 12.500 9c-.5 4-6.500 4-6.500 0 0-3 4.500-2.500 4 .5" fill="none" stroke="#eee" stroke-width="1.500"/></svg></span>
    <span class="pin near"><svg><use href="#globe"/></svg></span><span class="pin near"><svg><use href="#esc"/></svg></span><span class="pin near"><svg><use href="#esc"/></svg></span>
    <span class="pin near"><svg><use href="#globe"/></svg></span><span class="pin near"><svg><use href="#globe"/></svg></span><span class="pin near"><svg><use href="#globe"/></svg></span><span class="pin near"><svg><use href="#globe"/></svg></span>
    <span class="pin"><svg viewBox="0 0 16 16"><rect width="16" height="16" rx="1.500" fill="#f6f4f4"/><path d="M1 15Q11 13 14 2" fill="none" stroke="#c9a9a9" stroke-width="1.300"/></svg></span>
    <span class="pin"><svg><use href="#esc"/></svg></span><span class="pin"><svg><use href="#yt"/></svg></span>
    <span class="pin"><svg viewBox="0 0 16 16"><circle cx="8" cy="8" r="8" fill="#fff"/><g fill="none" stroke-width="2.200"><path d="M4 5.500A4.800 4.800 0 0 1 11.500 4.600" stroke="#ea4335"/><path d="M4 5.500a4.800 4.800 0 0 0 0 5" stroke="#fbbc05"/><path d="M4 10.500a4.800 4.800 0 0 0 7.300 1" stroke="#34a853"/><path d="M11.300 11.500A4.800 4.800 0 0 0 12.800 8H8" stroke="#4285f4"/></g></svg></span>
    <span class="pin"><svg viewBox="0 0 16 16"><path fill="#ee1c25" d="M0 0h16v16H0z"/><rect x="2.500" y="5" width="11" height="6.500" rx="3.200" fill="none" stroke="#fff" stroke-width="2"/></svg></span>
    <span class="pin"><svg viewBox="0 0 16 16"><circle cx="8" cy="8" r="7.300" fill="#f4fbff" stroke="#1b8dbf" stroke-width="1.400"/><path d="M2.500 5 5.500 13 8 6l2.500 7L13 5M5 5.500h-3M10 5.500H6" fill="none" stroke="#1b8dbf" stroke-width="1.500"/></svg></span>
    <span class="pin"><svg viewBox="0 0 16 16"><path fill="#dfe9f5" d="M0 0h16v16H0z"/><circle cx="8" cy="4" r="2.500" fill="#8a6a55"/><path d="M2 16q0-8 5-9h3q4 2 5 9z" fill="#3c69a8"/><path d="M6 8l3 7" stroke="#222" stroke-width="2"/></svg></span>
    <span class="pin"><svg viewBox="0 0 16 16"><path fill="#fff" d="M0 0h16v16H0z"/><path d="M2.500 8 4 4.500h3L8 7 6.500 8zM2.500 8l2 3.500 3 .5" fill="none" stroke="#f08a24" stroke-width="1.300"/><path d="M8.500 3.500h3l2.500 4-1.500 4.500h-3L7.500 9.500M10.500 5.500l2 2M9 11l2-2" fill="none" stroke="#555" stroke-width="1.200"/><path d="M8 6h3v3.500H8z" fill="#f08a24"/></svg></span>
    <span class="pin"><svg viewBox="0 0 16 16" fill="#fff"><ellipse cx="3.500" cy="8" rx="3.500" ry="1.900"/><ellipse cx="12.500" cy="8" rx="3.500" ry="1.900"/><circle cx="8" cy="4.800" r="1.600"/><path d="M6 7.500h4v1.500H6zM5.500 10h5v1.300h-5zM6.500 12h3l-1.500 2z"/><path d="M6 2l1 2M10 2 9 4" stroke="#fff"/></svg></span>
    <span class="pin"><svg viewBox="0 0 16 16"><rect width="16" height="16" rx="1.500" fill="#4285f4"/><path d="M3 4.500h10M3 8h10M3 11.500h6" stroke="#fff" stroke-width="1.800"/></svg></span>
    <span class="pin"><svg><use href="#gh"/></svg></span><span class="pin"><svg><use href="#gh"/></svg></span>
   </div>
   <div class="gx-tab d-flex align-items-center align-self-end" style="width:65px;padding:0 9px 0 5px">
    <svg width="16" height="16"><use href="#globe"/></svg><span style="margin-left:4px;letter-spacing:-.4px;background:linear-gradient(90deg,#fff 60%,#444);-webkit-background-clip:text;color:transparent">Inf</span>
    <svg class="ms-auto" width="10" height="10" viewBox="0 0 10 10" stroke="#fff" stroke-width="1.200"><path d="M.5.5l9 9M9.500.5l-9 9"/></svg>
   </div>
   <span class="d-flex align-items-center pt-2" style="padding-left:9px"><svg width="11" height="11" viewBox="0 0 11 11" stroke="currentColor"><path d="M5.500 0v11M0 5.500h11"/></svg></span>
   <span class="d-flex flex-grow-1" data-t="t-wb"></span>
  </div>
  <div class="toolbar d-flex align-items-center"><span class="d-flex align-items-center" data-t="t-nav"></span><span class="url fit" data-w="343">enlace-academico.<b>escuelaing.edu.co</b>/psp/ECCS92PR/EMPLO</span><span class="d-flex align-items-center ms-auto" data-t="t-act"></span></div>
  <div class="bookmarks d-flex align-items-start pt-1" data-t="t-book"></div>
  <div class="webpage acad overflow-hidden">
   <div class="crumbs d-flex">
    <div class="d-flex" style="width:84px;border-right:1px solid #3a3a9c;padding-left:6px;line-height:22px"><span class="fit" data-w="48">Favoritos</span><svg width="10" height="6" viewBox="0 0 10 6" style="margin:7px 0 0 5px"><path d="M0 0h10L5 6z" fill="#a9c8e8"/></svg></div>
    <div class="d-flex" style="padding-left:14px;line-height:22px"><span class="fit" data-w="79">Menú Principal</span><svg width="10" height="6" viewBox="0 0 10 6" style="margin:7px 0 0 5px"><path d="M0 0h10L5 6z" fill="#a9c8e8"/></svg></div>
    <svg width="6" height="9" viewBox="0 0 6 9" style="margin:8px 12px 0 32px" fill="none" stroke="#b8c8e8" stroke-width="1.300"><path d="M.5.5l4.500 4-4.500 4"/></svg><span class="fit" data-w="47" style="line-height:24px">Alumnos</span>
    <svg width="6" height="9" viewBox="0 0 6 9" style="margin:8px 12px 0 28px" fill="none" stroke="#b8c8e8" stroke-width="1.300"><path d="M.5.5l4.500 4-4.500 4"/></svg><span class="fit" data-w="134" style="line-height:24px">Información Demográfica</span>
    <svg width="16" height="16" style="margin:6px 6px 0 296px"><use href="#home"/></svg><span class="fit" data-w="31" style="line-height:27px">Inicio</span>
    <span style="width:1px;height:18px;background:#8fa6d8;margin:4px 18px 0 18px"></span><span class="fit" data-w="62" style="line-height:27px;font-size:13px">Desconex</span>
   </div>
   <div class="banner d-flex">
    <svg width="216" height="57" viewBox="1002 138 216 57">
     <g stroke="#4a72cc" stroke-width="1" fill="none" opacity=".8"><path d="M1008 181 1032 140M1008 181 1060 192M1008 181 1022 193M1008 181 1005 160M1032 140 1102 176M1060 146 1070 192M1060 146 1010 180M1102 176 1078 140M1102 176 1070 193M1102 176 1108 193M1066 192 1056 142"/></g>
     <circle cx="1008" cy="181" r="4.500" fill="#5f88da"/><circle cx="1103" cy="175" r="2.800" fill="#6f96e0"/><circle cx="1060" cy="147" r="3" fill="#3c64c0"/>
     <text x="1029.500" y="182.500" font-family="Liberation Sans,sans-serif" font-size="51" textLength="183" lengthAdjust="spacingAndGlyphs" fill="#e6fbff" style="text-shadow:2px 2px 2px #0b2466">ENLACE - Académico</text>
    </svg>
    <div class="d-flex flex-shrink-0" style="margin-left:500px;line-height:55px"><span class="fit" data-w="45">Añadir a</span><svg width="10" height="6" viewBox="0 0 10 6" style="margin:25px 0 0 6px"><path d="M0 0h10L5 6z" fill="#8fb4e0"/></svg></div>
    <div class="d-flex flex-column align-items-center flex-shrink-0" style="margin-left:31px;padding-top:9px"><svg width="24" height="23" viewBox="0 0 24 23"><path d="M0 1q5-1 9 1 7 3 14.500 1-2 8-9 9-5 0-8 1l3.500 9-1.500 1z" fill="#fff"/></svg><span class="fit" data-w="62" style="line-height:16px;margin-top:3px">Notificación</span></div>
    <div class="flex-shrink-0" style="margin-left:29px;padding-top:9px;width:24px"><svg width="24" height="24" viewBox="0 0 24 24" style="margin-left:7px" fill="none" stroke="#fff" stroke-width="1.800"><circle cx="12" cy="12" r="11"/><path d="M8 17V9l4-2 5-1v10l-5 2z"/></svg><span class="d-block" style="line-height:16px;margin-top:2px;letter-spacing:-.6px">Nav</span></div>
   </div>
   <div class="who d-flex align-items-center"><span class="fit" data-w="267" style="padding-top:2px">SANTIAGO NICOLAS PARRA GIRALDO</span>
    <div class="align-self-start d-flex" style="margin-left:72px"><div class="pick d-flex justify-content-between align-items-center"><span>Más...</span><svg width="9" height="6" viewBox="0 0 9 6" fill="none" stroke="#666" stroke-width="1.700"><path d="M.7.8 4.500 4.500 8.300.8"/></svg></div>
    <svg width="17" height="17" viewBox="0 0 17 17" style="margin:13px 0 0 1px"><circle cx="8.500" cy="8.500" r="7.900" fill="#dfe9fb" stroke="#667" stroke-width="1.200"/><path d="M4.500 4.500l4 4-4 4M8.500 4.500l4 4-4 4" fill="none" stroke="#3f57a0" stroke-width="1.400"/></svg></div></div>
   <div class="ptabs d-flex"><div class="ptab" style="width:80px"><span class="fit" data-w="58"><u>D</u>irecciones</span></div><div class="ptab" style="width:111px"><span class="fit" data-w="89">Números Teléfono</span></div><div class="ptab" style="width:127px"><span class="fit" data-w="105">Direcciones <u>C</u>orreo-E</span></div><div class="ptab on" style="width:167px"><span class="fit" data-w="145">Información Demográfica</span></div></div>
   <div class="ptitle"><span class="fit" data-w="164">Información Demográfica</span></div>
   <div style="height:169px">
    <div class="frow d-flex"><span class="lab">ID</span><b style="padding-left:18px">1000046287</b></div>
    <div class="frow d-flex"><span class="lab">Género</span><span style="padding-left:28px">Masculino</span></div>
    <div class="frow d-flex"><span class="lab">Fecha Nacimiento</span><span style="padding-left:28px">19/08/2002</span></div>
    <div class="frow d-flex"><span class="lab">País Nacimiento</span><span style="padding-left:28px">Colombia</span></div>
    <div class="frow d-flex"><span class="lab">Estado Nacim</span><span style="padding-left:28px">Bogotá</span></div>
    <div class="frow d-flex"><span class="lab">Estado Civil</span><span style="padding-left:28px">Soltero</span></div>
    <div class="frow d-flex"><span class="lab" style="line-height:18px">Servicio Militar</span></div>
   </div>
   <div style="height:108px"><div class="shead"><span class="fit" data-w="190">Número Documento Identidad</span></div><div class="scols d-flex"><span class="c1">País</span><span class="c2">Tipo Doc Identidad</span><span>Doc Identidad</span></div>
    <div class="sval d-flex"><span class="c1">Colombia</span><span class="c2">C.C.</span><span>1000941631</span></div>
    <div class="sval d-flex" style="margin-top:13px"><span class="c1">Colombia</span><span class="c2">T.I.</span><span>1000941631</span></div></div>
   <div style="height:73px"><div class="shead"><span class="fit" data-w="87">Origen Étnico</span></div><div class="scols d-flex"><span class="c1">Grupo Étnico</span><span class="c2">Descripción</span><span>Principal</span></div></div>
   <div style="height:69px"><div class="shead"><span class="fit" data-w="163">Información Nacionalidad</span></div><div class="scols d-flex"><span class="c1">Estado Nacionalidad</span><span class="c2">País</span></div></div>
   <div style="height:69px"><div class="shead"><span class="fit" data-w="115">Permiso Conducir</span></div><div class="scols d-flex"><span class="c1">Nº Permiso</span><span class="c2">País</span><span>Estado</span></div></div>
   <div style="height:79px"><div class="shead"><span class="fit" data-w="152">Datos Visado o Permiso</span></div><div class="scols d-flex"><span class="c1">Tipo</span><span class="c2">Visado/Permiso</span><span>País</span></div></div>
   <div style="margin-left:9px;line-height:18px"><span class="fit" data-w="440">Si alguno de los datos no es correcto, contacte a la Oficina de Registro Académico</span></div>
   <div style="width:620px;height:1px;background:#b5b5b5;margin:22px 0 0 13px"></div>
  </div>
 </div>
</section>
</div>

<footer class="taskbar d-flex">
 <span class="tk sys d-flex justify-content-center align-items-center"><svg viewBox="0 0 24 24" fill="#fff"><path d="M4 6l6.500-1v6.500H4zM11.500 4.800 20 3.800v7.700h-8.500zM4 12.500h6.500V19L4 18zM11.500 12.500H20v7.700l-8.500-1z"/></svg></span>
 <span class="tk sys d-flex justify-content-center align-items-center"><svg viewBox="0 0 24 24" fill="none" stroke="#fff" stroke-width="2"><circle cx="14" cy="10" r="8"/><path d="M8.500 15.500 1.500 23"/></svg></span>
 <span class="tk sys d-flex justify-content-center align-items-center"><svg viewBox="0 0 24 24" fill="none" stroke="#fff" stroke-width="1.300"><path d="M4.500 4v3h10V4M4.500 20v-3h10v3M4.500 9.500h10v5h-10zM18.500 4v16"/><path d="M17 8.500h3v3h-3z" fill="#fff"/></svg></span>
 <span class="tk run d-flex justify-content-center align-items-center" style="margin-left:2px"><svg viewBox="0 0 24 24"><circle cx="12" cy="12" r="11.300" fill="#1ed760"/><path d="M5 8.500q8-2 14 1.500M6 12.300q6.500-1.800 12 1.300M6.500 15.800q5.500-1.300 10 1.200" fill="none" stroke="#14301c" stroke-width="1.900"/></svg></span>
 <span class="tk run d-flex justify-content-center align-items-center"><svg viewBox="0 0 20 20" fill="none" stroke="#e0203f" stroke-width="1.100"><use href="#opera"/></svg></span>
 <span class="tk run d-flex justify-content-center align-items-center"><svg viewBox="0 0 24 24"><path d="M1 3h9l2 2h10v5H1z" fill="#e8a917"/><path d="M1 6h22v14H1z" fill="#ffd560"/><path d="M5 21v-8h14v8h-4v-4H9v4z" fill="#3d9be0"/></svg></span>
 <span class="tk d-flex justify-content-center align-items-center"><svg viewBox="0 0 24 24"><path d="M8 1h14v12H8z" fill="#1490df"/><path d="M15 1h7v6h-7z" fill="#50d9ff"/><path d="M6 12l9 5 9-5v10H6z" fill="#1a7fd4"/><path d="M24 12v10H10z" fill="#35b8f1"/><rect y="6" width="12" height="12" rx="1" fill="#0f6cbd"/><circle cx="6" cy="12" r="3" fill="none" stroke="#fff" stroke-width="1.800"/></svg></span>
 <span class="tk run d-flex justify-content-center align-items-center"><svg viewBox="0 0 24 24"><circle cx="12" cy="12" r="12" fill="#5865f2"/><svg x="4" y="4" width="16" height="16" viewBox="0 0 20 20" fill="#fff"><path d="M7 3.500 3.700 4.600C1.800 7.400 1 10.800 1.300 14.500c1.500 1.100 3 1.700 4.500 2l1-1.600c2 .7 4.500.7 6.500 0l1 1.600c1.500-.3 3-.9 4.500-2 .3-3.700-.5-7.100-2.400-9.900L13 3.500l-.7 1.200q-2.300-.3-4.600 0zM7 9a1.600 1.800 0 1 1 0 3.600A1.600 1.800 0 0 1 7 9zm6 0a1.600 1.800 0 1 1 0 3.600A1.600 1.800 0 0 1 13 9z" fill-rule="evenodd"/></svg></svg><span class="nbadge position-absolute" style="right:11px">1</span></span>
 <span class="tk run d-flex justify-content-center align-items-center"><svg viewBox="0 0 24 24"><circle cx="13" cy="4" r="3.500" fill="#7b83eb"/><circle cx="21" cy="5" r="2.600" fill="#5059c9"/><path d="M8 9h16v7q-2 4-5 3-3 5-8 2-3-2-3-5z" fill="#6a70d8"/><rect y="6" width="12" height="12" rx="1" fill="#4b53bc"/><path d="M3.500 9.500h5M6 9.500V15" stroke="#fff" stroke-width="1.600"/></svg><span class="nbadge position-absolute" style="background:#c4163c;right:10px;bottom:5px">1</span></span>
 <span class="tk run act d-flex justify-content-center align-items-center" style="margin-left:1px"><svg viewBox="0 0 24 24"><path d="M3.500 9C1 3 9-.500 16 1.500c6 2 7 11 1 14.500q-3 1-5-1l4-2q3.500-4.500 0-8.500Q9 2 7.500 9z" fill="#d83b01"/><path d="M10 1l2 0 1 16h-2zM17 8l2 1-8 9-1-2z" fill="#d5d5d5"/><circle cx="5" cy="18.500" r="2.300" fill="none" stroke="#0f7ed0" stroke-width="1.900"/><circle cx="13" cy="21" r="2" fill="none" stroke="#2da0f0" stroke-width="1.900"/></svg></span>
 <div class="d-flex align-items-center ms-auto">
  <svg width="24" height="24" viewBox="0 0 24 24"><circle cx="11" cy="11" r="10" fill="#1497d8" stroke="#fff" stroke-width="1.600"/><text x="6.500" y="17.500" font-size="17" font-weight="700" font-family="Open Sans,sans-serif" fill="#fff">?</text><circle cx="18.500" cy="16.500" r="4.800" fill="#f2a91e"/><path d="M18.500 14v5" stroke="#fff" stroke-width="1.500"/></svg>
  <svg width="16" height="16" viewBox="0 0 16 16" style="margin-left:20px" fill="none" stroke="#fff" stroke-width="1.200"><circle cx="11" cy="3.500" r="2.600"/><path d="M8.500 8Q14 5.500 14.800 11"/><circle cx="5" cy="8.500" r="2.400"/><path d="M1 15q1-4 4-4t4 4"/></svg>
  <svg width="12" height="7" viewBox="0 0 12 7" style="margin-left:22px" fill="none" stroke="#fff" stroke-width="1.200"><path d="M.5 6.500 6 1l5.500 5.500"/></svg>
  <svg width="16" height="12" viewBox="0 0 16 12" style="margin-left:10px" fill="none" stroke="#fff"><path d="M5 3.500h9.500v6H4v-3M15.500 5v3M1 .5v2M3.500.5v2M0 3h4.500q0 2.500-2.200 2.500V9"/><path d="M6 5h7v3H6z" fill="#fff"/></svg>
  <svg width="17" height="14" viewBox="0 0 17 14" style="margin-left:8px" fill="none" stroke="#fff"><path d="M.5 5h2.500l3.500-3.500v11L3 9H.500zM8.500 5q1.500 2 0 4M10.800 3.200q3 3.800 0 7.600"/><path d="M13.500 1.500q4 5.500 0 11" stroke="#777"/></svg>
  <svg width="16" height="14" viewBox="0 0 16 14" style="margin-left:7px" fill="none" stroke="#fff"><path d="M5 2.500h10.500v7.500H4.500V7M9 10v3M6 13.500h7M.5.5h4v4h-4zM2.500 4.500V9"/></svg>
  <div class="text-center" style="width:60px;line-height:18px;margin-left:9px"><span class="fit" data-w="51">9:37 p. m.</span><br><span class="fit" data-w="58">22/08/2023</span></div>
  <svg width="16" height="16" viewBox="0 0 16 16" style="margin:0 20px 0 17px"><path d="M0 0h16v12.500h-5L8 16l-3-3.500H0z" fill="#fff"/><path d="M3 4h10M3 6.500h10M3 9h6" stroke="#1c1c1c"/></svg>
  <span style="width:1px;height:40px;background:#555;margin-right:4px"></span>
 </div>
</footer>

<script>
const ico=(id,cls='cell')=>`<div class="${cls} d-flex justify-content-center align-items-center"><svg class="ico"><use href="#${id}"/></svg></div>`;
const dash='<div class="dash d-flex justify-content-center align-items-center"></div>';
const order=['speed','broom','twitch','cpu','-','cs','-','wa','tg','ig','twc','dc','-','play','send','-','clock','down','cube','gear','-','tr'];
document.querySelectorAll('[data-side]').forEach(s=>{
  s.innerHTML=document.getElementById('t-side').innerHTML+order.map(o=>o==='-'?dash:ico(o)).join('')+'<div style="height:43px"></div>'+ico('pic','low')+ico('more','low');
});
document.querySelectorAll('[data-t]').forEach(e=>e.append(document.getElementById(e.dataset.t).content.cloneNode(true)));
document.querySelectorAll('[data-levels]').forEach(e=>{
  e.innerHTML='<div class="lvl"><svg width="40" height="41"><use href="#check"/></svg></div>'.repeat(+e.dataset.levels);
});
document.querySelectorAll('.pin').forEach(p=>p.classList.add('d-flex','justify-content-center','align-items-center'));
/* spread each label over its column width */
document.querySelectorAll('.fit[data-w]').forEach(e=>{
  e.style.letterSpacing=((+e.dataset.w-e.getBoundingClientRect().width)/e.textContent.length).toFixed(3)+'px';
});
</script>
</body>
</html>
